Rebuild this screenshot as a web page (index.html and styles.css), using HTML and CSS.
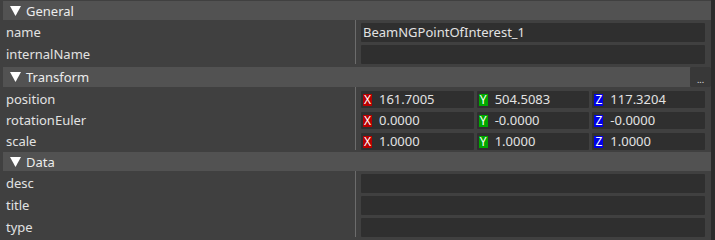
FILE: index.html
```html
<!DOCTYPE html>
<html lang="en">
<head>
    <meta charset="UTF-8">
    <title>Inspector</title>
    <link rel="stylesheet" href="styles.css">
</head>
<body>
    <div class="window">
        <div class="panel">
            <!-- General -->
            <div class="header first">
                <svg class="arrow" width="11" height="10" viewBox="0 0 11 10"><polygon points="0,0 11,0 5.5,10" fill="#ffffff"/></svg>
                <span>General</span>
            </div>
            <div class="row">
                <div class="label">name</div>
                <div class="value"><div class="field">BeamNGPointOfInterest_1</div></div>
            </div>
            <div class="row">
                <div class="label">internalName</div>
                <div class="value"><div class="field"></div></div>
            </div>

            <!-- Transform -->
            <div class="header tall">
                <svg class="arrow" width="11" height="10" viewBox="0 0 11 10"><polygon points="0,0 11,0 5.5,10" fill="#ffffff"/></svg>
                <span>Transform</span>
                <div class="more">...</div>
            </div>
            <div class="row vec">
                <div class="label">position</div>
                <div class="value vec3">
                    <div class="field"><span class="axis x">X</span>161.7005</div>
                    <div class="field"><span class="axis y">Y</span>504.5083</div>
                    <div class="field"><span class="axis z">Z</span>117.3204</div>
                </div>
            </div>
            <div class="row vec">
                <div class="label">rotationEuler</div>
                <div class="value vec3">
                    <div class="field"><span class="axis x">X</span>0.0000</div>
                    <div class="field"><span class="axis y">Y</span>-0.0000</div>
                    <div class="field"><span class="axis z">Z</span>-0.0000</div>
                </div>
            </div>
            <div class="row vec">
                <div class="label">scale</div>
                <div class="value vec3">
                    <div class="field"><span class="axis x">X</span>1.0000</div>
                    <div class="field"><span class="axis y">Y</span>1.0000</div>
                    <div class="field"><span class="axis z">Z</span>1.0000</div>
                </div>
            </div>

            <!-- Data -->
            <div class="header">
                <svg class="arrow" width="11" height="10" viewBox="0 0 11 10"><polygon points="0,0 11,0 5.5,10" fill="#ffffff"/></svg>
                <span>Data</span>
            </div>
            <div class="row">
                <div class="label">desc</div>
                <div class="value"><div class="field"></div></div>
            </div>
            <div class="row">
                <div class="label">title</div>
                <div class="value"><div class="field"></div></div>
            </div>
            <div class="row">
                <div class="label">type</div>
                <div class="value"><div class="field"></div></div>
            </div>
        </div>
        <div class="scrollbar"></div>
    </div>
</body>
</html>
```

FILE: styles.css
```css
html, body {
    margin: 0;
    height: 100%;
    background: #404040;
}
body {
    font-family: "Noto Sans", "Open Sans", sans-serif;
    font-size: 13px;
    color: #e2e2e2;
    overflow: hidden;
}
.window {
    display: flex;
    height: 240px;
}
.panel {
    flex: 1;
    padding-left: 3px;
}
.scrollbar {
    width: 4px;
    background: #2b2b2b;
}
.header {
    display: flex;
    align-items: center;
    height: 19px;
    margin-top: 2px;
    padding-left: 7px;
    background: #525252;
    color: #ececec;
}
.header.first {
    margin-top: 1px;
}
.header.tall {
    height: 20px;
    margin-top: 3px;
}
.header .arrow {
    margin-right: 5px;
}
.more {
    margin-left: auto;
    width: 21px;
    height: 20px;
    background: #383838;
    border-radius: 1px;
    font-size: 9px;
    line-height: 26px;
    text-align: center;
    color: #e0e0e0;
}
.row {
    display: grid;
    grid-template-columns: 352px 1fr;
}
.label {
    padding: 3px 0 0 3px;
    line-height: 19px;
}
.value {
    border-left: 1px solid #6c6c6c;
    padding: 3px 6px 0 5px;
}
.field {
    height: 19px;
    line-height: 19px;
    padding-left: 2px;
    background: #2f2f2f;
    border-radius: 1px;
    white-space: nowrap;
    overflow: hidden;
}
.row.vec .label {
    padding-top: 4px;
    line-height: 17px;
}
.row.vec .value {
    padding-top: 4px;
}
.vec3 {
    display: grid;
    grid-template-columns: 1fr 1fr 1fr;
    gap: 3px;
}
.vec3 .field {
    height: 17px;
    line-height: 17px;
    display: flex;
    align-items: center;
}
.axis {
    display: inline-block;
    width: 9px;
    height: 12px;
    margin: 0 7px 0 0;
    font-size: 12px;
    line-height: 12px;
    text-align: center;
    color: #ffffff;
}
.axis.x { background: #b80000; }
.axis.y { background: #00a800; }
.axis.z { background: #0000e6; }
```
